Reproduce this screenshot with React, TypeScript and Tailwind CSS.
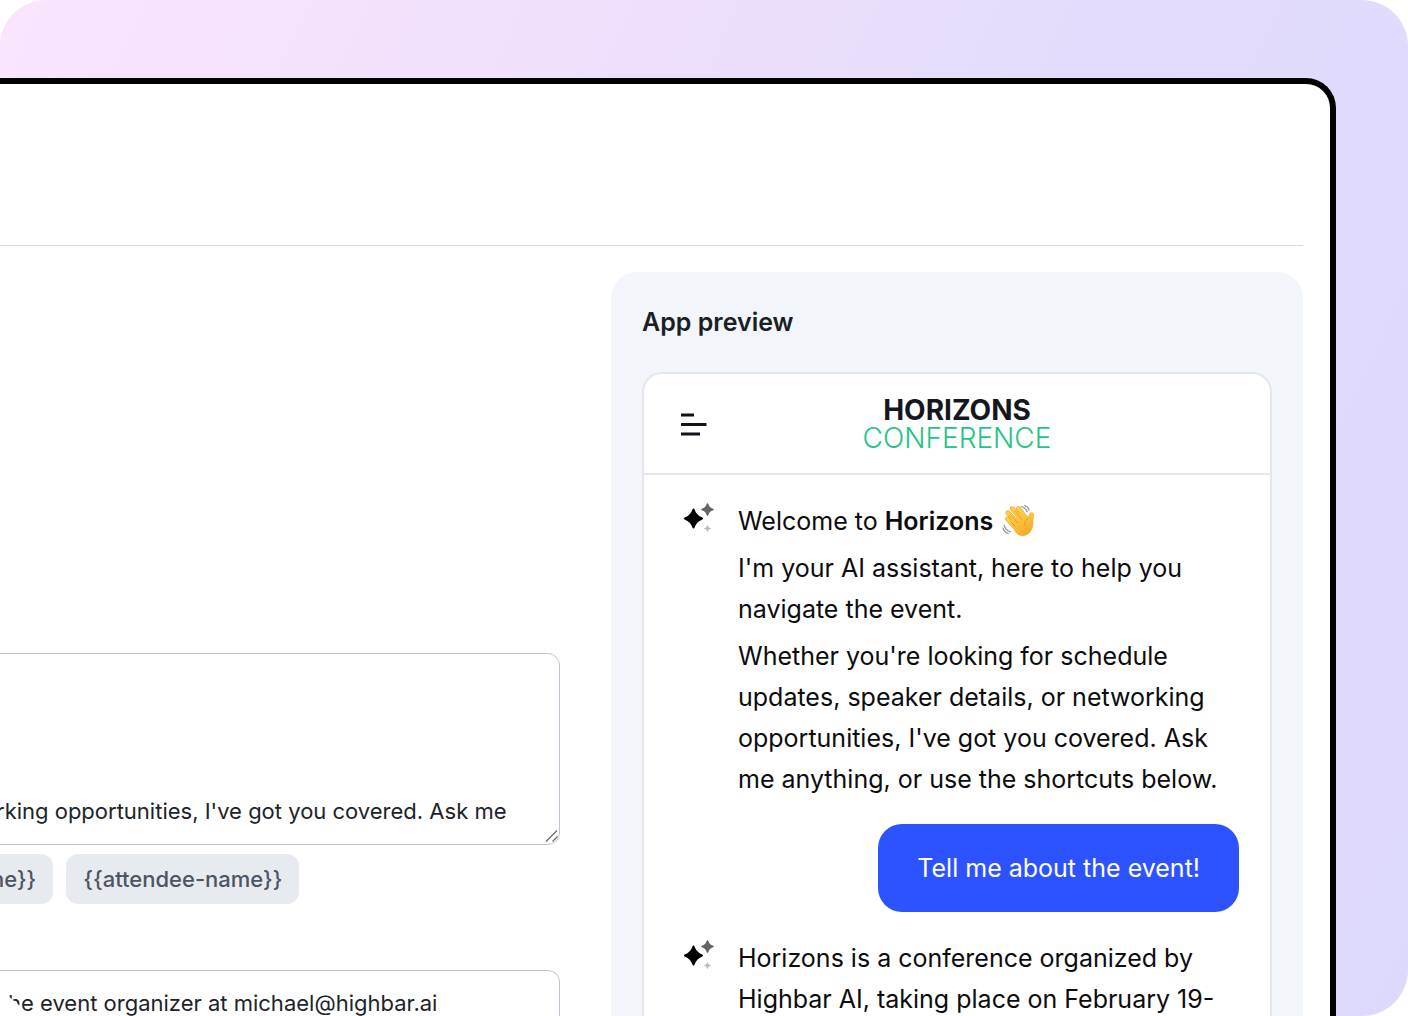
import React from "react";

function Sparkles() {
  return (
    <svg aria-hidden="true" viewBox="0 0 32 32" className="mt-0.5 h-8 w-8 shrink-0">
      <path
        d="M11.500 6.500C13 11.500 15 13.500 20 15.500C15 17.500 13 19.500 11.500 24.500C10 19.500 8 17.500 3 15.500C8 13.500 10 11.500 11.500 6.500Z"
        fill="#000"
        stroke="#000"
        strokeWidth="2"
        strokeLinejoin="round"
      />
      <path
        d="M25.500 1C26.400 4.400 27.600 5.600 31 6.500C27.600 7.400 26.400 8.600 25.500 12C24.600 8.600 23.400 7.400 20 6.500C23.400 5.600 24.600 4.400 25.500 1Z"
        fill="#666"
        stroke="#666"
        strokeWidth="1.600"
        strokeLinejoin="round"
      />
      <path
        d="M25.500 22.500C26 24.300 26.700 25 28.500 25.500C26.700 26 26 26.700 25.500 28.500C25 26.700 24.300 26 22.500 25.500C24.300 25 25 24.300 25.500 22.500Z"
        fill="#bbb"
        stroke="#bbb"
        strokeWidth="1"
        strokeLinejoin="round"
      />
    </svg>
  );
}

function WavingHand() {
  return (
    <svg
      role="img"
      aria-label="Waving hand"
      viewBox="0 0 32 32"
      className="ml-0.5 inline-block h-[33px] w-[33px] align-[-7px]"
    >
      <defs>
        <linearGradient id="skin" x1="0" y1="0" x2="0.6" y2="1">
          <stop offset="0" stopColor="#ffd54a" />
          <stop offset="1" stopColor="#f5a92c" />
        </linearGradient>
      </defs>
      <g fill="none" stroke="#e29a26" strokeLinecap="round" strokeWidth="4.600">
        <path d="M5.500 14.500L14 24" />
        <path d="M5.800 8.500L17 20.500" />
        <path d="M10 4.500L20.500 16.500" />
        <path d="M16 4.500L23.500 14" />
      </g>
      <g fill="none" stroke="#ffcb43" strokeLinecap="round" strokeWidth="3.800">
        <path d="M5.500 14.500L14 24" />
        <path d="M5.800 8.500L17 20.500" />
        <path d="M10 4.500L20.500 16.500" />
        <path d="M16 4.500L23.500 14" />
      </g>
      <path
        d="M8 17L20 8.500L25 14C25.800 11.500 26 8.500 28 8C30.500 7.500 31.600 9.500 31 12C30.300 15 30.400 17.500 30 21C29.500 26 25.500 30.500 20.500 31C16.500 31.300 14 29 12 26Z"
        fill="url(#skin)"
      />
      <path
        d="M9 11.500L15.500 18.500M12.500 7L19 14.500M8.500 17L12.500 21.500M25 14C22.500 15.500 21.500 18 22.500 21"
        fill="none"
        stroke="#df9726"
        strokeLinecap="round"
        strokeWidth="0.900"
      />
      <g fill="none" stroke="#9a9a9a" strokeLinecap="round" strokeWidth="1.300">
        <path d="M19 2.500C21.500 3 23.500 5 24.300 7.500" />
        <path d="M22 1.500C24 2 25.800 3.800 26.300 6" />
        <path d="M2 20.500C2.800 23.500 5 26 8 27" />
        <path d="M1 23.500C1.800 26 3.500 27.800 6 28.500" />
      </g>
    </svg>
  );
}

function ResizeGrip() {
  return (
    <svg
      aria-hidden="true"
      viewBox="0 0 14 14"
      className="pointer-events-none absolute right-px bottom-0.5 h-3.5 w-3.5"
      fill="none"
      stroke="#666"
      strokeWidth="1.200"
    >
      <path d="M1 12.500L12 1.500M7.500 12.500L12.500 7.500" />
    </svg>
  );
}

function Chip({ children }: { children: React.ReactNode }) {
  return (
    <button
      type="button"
      className="h-[50px] shrink-0 rounded-xl bg-[#e7eaef] px-[17px] text-[22px] font-medium text-[#4d5463]"
    >
      {children}
    </button>
  );
}

function EditorColumn() {
  return (
    <div className="min-w-0 pt-[381px]">
      <div className="relative -ml-5">
        <textarea
          aria-label="Welcome message"
          defaultValue="rking opportunities, I've got you covered. Ask me"
          className="block h-[192px] w-full resize-none overflow-hidden rounded-xl border border-[#bfc4d0] bg-white pt-[140px] pl-[15px] text-[22px] leading-[34px] whitespace-nowrap text-[#202329] outline-none"
        />
        <ResizeGrip />
      </div>
      <div className="mt-[9px] -ml-[26px] flex gap-[13px]">
        <Chip>ne{"}}"}</Chip>
        <Chip>{"{{attendee-name}}"}</Chip>
      </div>
      <div className="relative mt-[66px] -ml-5">
        <textarea
          aria-label="Fallback message"
          defaultValue="he event organizer at michael@highbar.ai"
          className="block h-[192px] w-full resize-none overflow-hidden rounded-xl border border-[#bfc4d0] bg-white pt-[15px] pl-[27px] text-[22px] leading-[34px] whitespace-nowrap text-[#202329] outline-none"
        />
        <svg
          aria-hidden="true"
          viewBox="0 0 16 20"
          className="pointer-events-none absolute top-[23px] left-[27px] h-5 w-4"
          fill="#fff"
        >
          <path d="M0 2L13 13V20H0Z" />
        </svg>
      </div>
    </div>
  );
}

function AssistantMessage({ children }: { children: React.ReactNode }) {
  return (
    <div className="flex gap-6">
      <Sparkles />
      <div className="min-w-0 flex-1 space-y-1.5 text-[25px] leading-[41px] text-[#0c0c0e]">{children}</div>
    </div>
  );
}

function AppPreview() {
  return (
    <section className="flex min-w-0 flex-col rounded-t-[26px] bg-[#f2f5f9] px-[31px] pt-8">
      <h2 className="text-[25px] leading-9 font-semibold text-[#1b1e25]">App preview</h2>
      <div className="mt-8 flex-1 rounded-t-[20px] border-2 border-b-0 border-[#e4e6ea] bg-white">
        <header className="grid h-[101px] grid-cols-[1fr_auto_1fr] items-center border-b-2 border-[#e4e6ea] px-9">
          <button type="button" aria-label="Menu" className="h-8 w-8">
            <svg
              aria-hidden="true"
              viewBox="0 0 32 32"
              className="h-8 w-8"
              fill="none"
              stroke="#11131a"
              strokeWidth="3"
              strokeLinecap="square"
            >
              <path d="M2.500 7H12.500M2.500 16.500H25M2.500 26H18.500" />
            </svg>
          </button>
          <div className="text-center leading-7">
            <div className="text-[28px] font-bold text-[#14171e]">HORIZONS</div>
            <div className="text-[28px] font-light text-[#1fc48b]">CONFERENCE</div>
          </div>
        </header>
        <div className="pt-[26px] pr-[31px] pl-[38px]">
          <AssistantMessage>
            <p>
              Welcome to <strong className="font-semibold">Horizons</strong> <WavingHand />
            </p>
            <p>I'm your AI assistant, here to help you navigate the event.</p>
            <p>
              Whether you're looking for schedule updates, speaker details, or networking opportunities, I've got you
              covered. Ask me anything, or use the shortcuts below.
            </p>
          </AssistantMessage>
          <div className="mt-6 mb-[26px] flex justify-end">
            <p className="rounded-3xl bg-[#2c53ff] px-[39px] py-6 text-[25px] leading-10 text-white">
              Tell me about the event!
            </p>
          </div>
          <AssistantMessage>
            <p>Horizons is a conference organized by Highbar AI, taking place on February 19-</p>
          </AssistantMessage>
        </div>
      </div>
    </section>
  );
}

export default function App() {
  return (
    <div className="bg-white font-['Inter',sans-serif]">
      <div className="h-screen overflow-hidden rounded-t-[46px] rounded-br-[46px] bg-[linear-gradient(115deg,#fae4fe_0%,#f5e2fc_16%,#e2dbfc_64%,#ddd9fd_100%)] pt-[78px] pr-[72px]">
        <main className="h-full overflow-hidden rounded-tr-[30px] border-t-[6px] border-r-[6px] border-black bg-white pr-[27px]">
          <div className="h-[162px] border-b border-[#d9dce2]" />
          <div className="mt-[26px] grid grid-cols-[560fr_692fr] gap-[51px]">
            <EditorColumn />
            <AppPreview />
          </div>
        </main>
      </div>
    </div>
  );
}
